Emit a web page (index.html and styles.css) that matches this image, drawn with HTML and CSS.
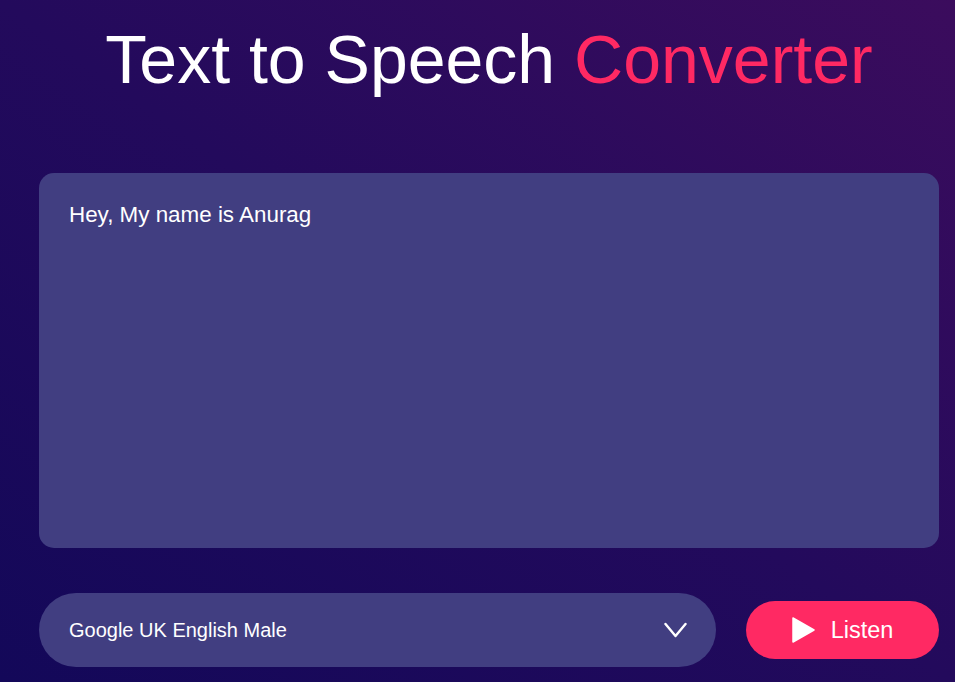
FILE: index.html
```html
<!DOCTYPE html>
<html lang="en">
<head>
<meta charset="utf-8">
<title>Text to Speech Converter</title>
<link rel="stylesheet" href="styles.css">
</head>
<body>
<main class="page">
  <h1 class="title">Text to Speech <span class="accent">Converter</span></h1>
  <textarea class="text-input" spellcheck="false">Hey, My name is Anurag</textarea>
  <div class="controls">
    <div class="voice-select">
      <span class="voice-name">Google UK English Male</span>
      <svg class="chevron" width="23" height="16" viewBox="0 0 23 16" aria-hidden="true">
        <polyline points="1.5,2 11.5,14 21.5,2" fill="none" stroke="#ffffff" stroke-width="2.4" stroke-linecap="round" stroke-linejoin="round"/>
      </svg>
    </div>
    <button class="listen-btn" type="button">
      <svg class="play" width="23" height="26" viewBox="0 0 23 26" aria-hidden="true">
        <polygon points="1,1 22,13 1,25" fill="#ffffff" stroke="#ffffff" stroke-width="1.5" stroke-linejoin="round"/>
      </svg>
      <span>Listen</span>
    </button>
  </div>
</main>
</body>
</html>
```
FILE: styles.css
```css
html, body {
  margin: 0;
  padding: 0;
  height: 100%;
}

body {
  background: linear-gradient(to right top, #130859 0%, #230a5c 50%, #3b0c5d 100%);
  font-family: "Liberation Sans", Arial, sans-serif;
  color: #ffffff;
  overflow: hidden;
}

.page {
  width: 900px;
  margin-left: 39px;
  display: flex;
  flex-direction: column;
}

.title {
  margin: 21px 0 0 0;
  font-size: 68px;
  font-weight: 400;
  line-height: 76px;
  text-align: center;
  color: #ffffff;
}

.accent {
  color: #ff2963;
}

.text-input {
  margin-top: 76px;
  width: 900px;
  height: 375px;
  box-sizing: border-box;
  padding: 29px 30px;
  border: none;
  border-radius: 15px;
  background: #413e81;
  color: #ffffff;
  font-family: "Liberation Sans", Arial, sans-serif;
  font-size: 22.4px;
  line-height: 1.15;
  resize: none;
  outline: none;
}

.controls {
  margin-top: 45px;
  display: flex;
  align-items: center;
  gap: 30px;
}

.voice-select {
  flex: 1;
  height: 74px;
  box-sizing: border-box;
  padding: 0 29px 0 30px;
  border-radius: 40px;
  background: #413e81;
  display: flex;
  align-items: center;
  justify-content: space-between;
  font-size: 20px;
}

.chevron {
  display: block;
}

.listen-btn {
  width: 193px;
  height: 58px;
  border: none;
  border-radius: 29px;
  background: #ff2963;
  color: #ffffff;
  font-family: "Liberation Sans", Arial, sans-serif;
  font-size: 23.5px;
  display: flex;
  align-items: center;
  justify-content: center;
  gap: 16px;
  padding: 0 0 0 0;
  cursor: pointer;
}

.play {
  display: block;
}
```
